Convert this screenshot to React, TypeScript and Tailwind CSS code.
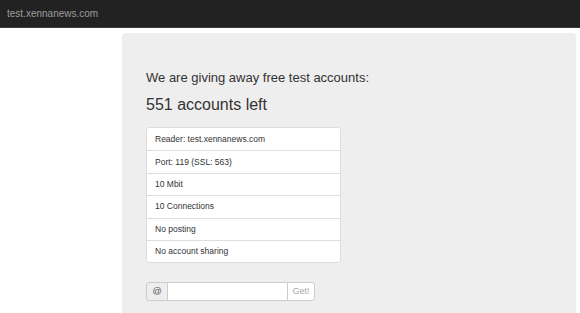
import React from "react";

const items = [
  "Reader: test.xennanews.com",
  "Port: 119 (SSL: 563)",
  "10 Mbit",
  "10 Connections",
  "No posting",
  "No account sharing",
];

export default function App() {
  return (
    <div className="h-[313px] bg-white overflow-hidden" style={{ fontFamily: '"Liberation Sans", Arial, sans-serif' }}>
      <div className="h-[28px] bg-[#222222] border-b border-[#3a3a3a] flex items-center px-[7px]">
        <span className="text-[10px] text-[#9d9d9d]">test.xennanews.com</span>
      </div>
      <div className="flex pt-[5px]">
        <div className="w-[122px] shrink-0" />
        <div className="w-[454px] h-[300px] bg-[#eeeeee] rounded-[4px] px-[24px] pt-[36px]">
          <h2 className="text-[13px] text-[#333333] leading-[18px]">We are giving away free test accounts:</h2>
          <h1 className="text-[16px] text-[#333333] leading-[20px] mt-[8px]">551 accounts left</h1>
          <ul className="mt-[12px] w-[195px] bg-white rounded-[3px] border border-[#dddddd]">
            {items.map((t, i) => (
              <li
                key={t}
                className={`h-[22.4px] flex items-center px-[8px] text-[8.5px] text-[#333333] ${i > 0 ? "border-t border-[#dddddd]" : ""}`}
              >
                {t}
              </li>
            ))}
          </ul>
          <div className="mt-[19px] flex h-[19px] w-[169px] text-[9px]">
            <span className="w-[22px] flex items-center justify-center bg-[#eeeeee] border border-[#cccccc] rounded-l-[3px] text-[#555555]">@</span>
            <input className="w-[119px] bg-white border-y border-[#cccccc] outline-none" />
            <span className="w-[28px] flex items-center justify-center bg-white border border-[#cccccc] rounded-r-[3px] text-[#aaaaaa]">Get!</span>
          </div>
        </div>
      </div>
    </div>
  );
}
